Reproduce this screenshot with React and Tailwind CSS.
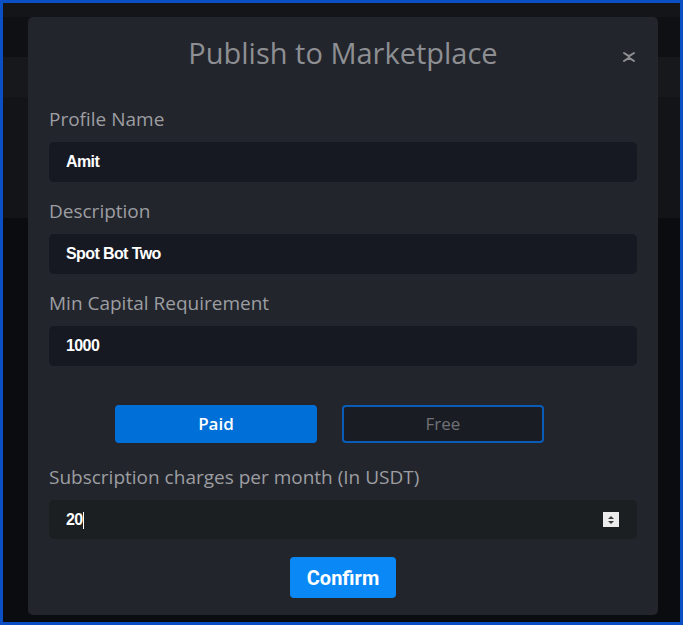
import React, { useState } from "react";

const FIELDS = [
  { label: "Profile Name", value: "Amit" },
  { label: "Description", value: "Spot Bot Two" },
  { label: "Min Capital Requirement", value: "1000" },
];

const labelFont = { fontFamily: "'Open Sans', sans-serif" };
const valueFont = { fontFamily: "'Liberation Sans', sans-serif" };

function CollapseIcon() {
  return (
    <svg width="14" height="12" viewBox="0 0 14 12" fill="none">
      <path d="M2 2 L7 5.2 L12 2" stroke="#8b8d91" strokeWidth="2" strokeLinecap="round" />
      <path d="M2 10 L7 6.8 L12 10" stroke="#8b8d91" strokeWidth="2" strokeLinecap="round" />
    </svg>
  );
}

function Spinner() {
  return (
    <div className="w-[16px] h-[15px] bg-[#ececec] flex items-center justify-center">
      <svg width="8" height="10" viewBox="0 0 8 10">
        <path d="M4 1 L7 4 L1 4 Z" fill="#3a3a3a" />
        <path d="M4 9 L7 6 L1 6 Z" fill="#3a3a3a" />
      </svg>
    </div>
  );
}

function PlanButton({ active, children, onClick }) {
  return (
    <button
      onClick={onClick}
      style={labelFont}
      className={
        active
          ? "w-[202px] h-[38px] rounded-[4px] bg-[#0070d8] text-white font-semibold text-[17px]"
          : "w-[202px] h-[38px] rounded-[4px] border-2 border-[#0a5cb8] bg-[#1a1c24] text-[#707275] text-[17px]"
      }
    >
      {children}
    </button>
  );
}

export default function App() {
  const [plan, setPlan] = useState("paid");

  return (
    <div className="w-[690px] h-[629px] bg-white" style={{ fontFamily: "Roboto, sans-serif" }}>
      <div className="relative w-[683px] h-[625px] border-[3px] border-[#0b4fc4] overflow-hidden">
        {/* page behind the backdrop */}
        <div className="flex flex-col h-full">
          <div className="h-[14px] bg-[#141518]" />
          <div className="h-[40px] bg-[#0f1013]" />
          <div className="h-[40px] bg-[#17181b]" />
          <div className="h-[121px] bg-[#131417]" />
          <div className="flex-1 bg-[#0b0c0f]" />
        </div>

        {/* modal */}
        <div className="absolute left-[25px] top-[14px] w-[630px] h-[598px] bg-[#23252c] rounded-[5px] px-[21px]">
          <div className="relative h-[92px] pt-[18px]">
            <h1 className="text-center text-[29px] leading-[36px] text-[#8d8f93]" style={labelFont}>
              Publish to Marketplace
            </h1>
            <button className="absolute right-[1px] top-[34px]">
              <CollapseIcon />
            </button>
          </div>

          {FIELDS.map((f) => (
            <div key={f.label} className="mb-[19px]">
              <div className="text-[19px] text-[#9c9ea2] leading-[20px] mb-[13px]" style={labelFont}>
                {f.label}
              </div>
              <div className="h-[40px] bg-[#161922] rounded-[5px] flex items-center pl-[17px]">
                <span className="text-[16px] font-bold text-white tracking-[-0.6px]" style={valueFont}>
                  {f.value}
                </span>
              </div>
            </div>
          ))}

          <div className="flex gap-[25px] mt-[39px] pl-[66px]">
            <PlanButton active={plan === "paid"} onClick={() => setPlan("paid")}>
              Paid
            </PlanButton>
            <PlanButton active={plan === "free"} onClick={() => setPlan("free")}>
              Free
            </PlanButton>
          </div>

          <div className="mt-[24px] text-[19px] text-[#9c9ea2] leading-[20px] mb-[13px]" style={labelFont}>
            Subscription charges per month (In USDT)
          </div>
          <div className="h-[39px] bg-[#1c1f22] rounded-[5px] flex items-center pl-[17px] pr-[18px]">
            <span className="text-[16px] font-bold text-white tracking-[-0.6px] flex-1" style={valueFont}>
              20<span className="inline-block w-[1px] h-[17px] bg-white align-middle" />
            </span>
            <Spinner />
          </div>

          <div className="flex justify-center mt-[18px]">
            <button className="w-[106px] h-[41px] rounded-[4px] bg-[#0a88f6] text-white font-bold text-[20px]">
              Confirm
            </button>
          </div>
        </div>
      </div>
    </div>
  );
}
